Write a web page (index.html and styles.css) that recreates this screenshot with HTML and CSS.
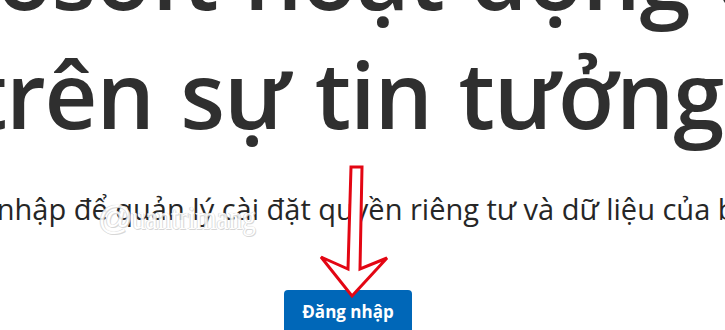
FILE: index.html
```html
<!DOCTYPE html>
<html lang="vi">
<head>
<meta charset="utf-8">
<title>Quyền riêng tư</title>
<link rel="stylesheet" href="styles.css">
</head>
<body>
<main class="stage">
  <div class="hero">
    <h1 class="title">Microsoft hoạt động dựa<br>trên sự tin tưởng</h1>
    <p class="lead">Đăng nhập để quản lý cài đặt quyền riêng tư và dữ liệu của bạn</p>
    <a class="btn" href="#">Đăng nhập</a>
  </div>
  <div class="watermark"><span class="wm-q">@</span><span class="wm-text">uantrimang</span></div>
  <svg class="arrow" width="80" height="140" viewBox="0 0 80 140">
    <polygon points="32,2 43,2 41,104 68,93 33,131 2,92 29,104" fill="#ffffff" stroke="#e30613" stroke-width="3" stroke-linejoin="miter"/>
  </svg>
</main>
</body>
</html>
```
FILE: styles.css
```css
html, body {
  margin: 0;
  padding: 0;
  background: #ffffff;
  overflow: hidden;
}
.stage {
  position: relative;
  width: 725px;
  height: 330px;
  overflow: hidden;
}
.hero {
  width: 1400px;
  margin-left: -352px;
  display: flex;
  flex-direction: column;
  align-items: center;
  text-align: center;
}
.title {
  margin: -85px 0 0 -2px;
  font-family: "Open Sans", "Noto Sans", sans-serif;
  font-weight: 600;
  font-size: 92px;
  line-height: 119px;
  color: #2f2f2f;
  white-space: nowrap;
  letter-spacing: -1.2px;
  word-spacing: 4px;
}
.lead {
  margin: 37px 0 0 -8px;
  font-family: "Open Sans", "Noto Sans", sans-serif;
  font-weight: 400;
  font-size: 29px;
  line-height: 38px;
  color: #262626;
  white-space: nowrap;
}
.btn {
  margin-top: 62px;
  display: inline-block;
  background: #0067b8;
  color: #ffffff;
  font-family: "Open Sans", "Noto Sans", sans-serif;
  font-weight: 700;
  font-size: 17px;
  line-height: 24px;
  padding: 10px 18px;
  border-radius: 4px;
  text-decoration: none;
}
.watermark {
  position: absolute;
  left: 98px;
  top: 197px;
  display: flex;
  align-items: baseline;
  color: #ffffff;
  font-family: "Liberation Serif", serif;
  font-size: 34px;
  line-height: 40px;
  text-shadow: 0 0 1px #c8c8c8, 1px 1px 0 #d4d4d4, -1px 0 0 #dcdcdc;
  opacity: 0.9;
}
.wm-q {
  font-family: "Liberation Sans", sans-serif;
  font-size: 34px;
}
.wm-text {
  display: inline-block;
  transform: scaleX(0.8);
  transform-origin: left center;
  margin-left: -1px;
}
.arrow {
  position: absolute;
  left: 319px;
  top: 165px;
}
```
